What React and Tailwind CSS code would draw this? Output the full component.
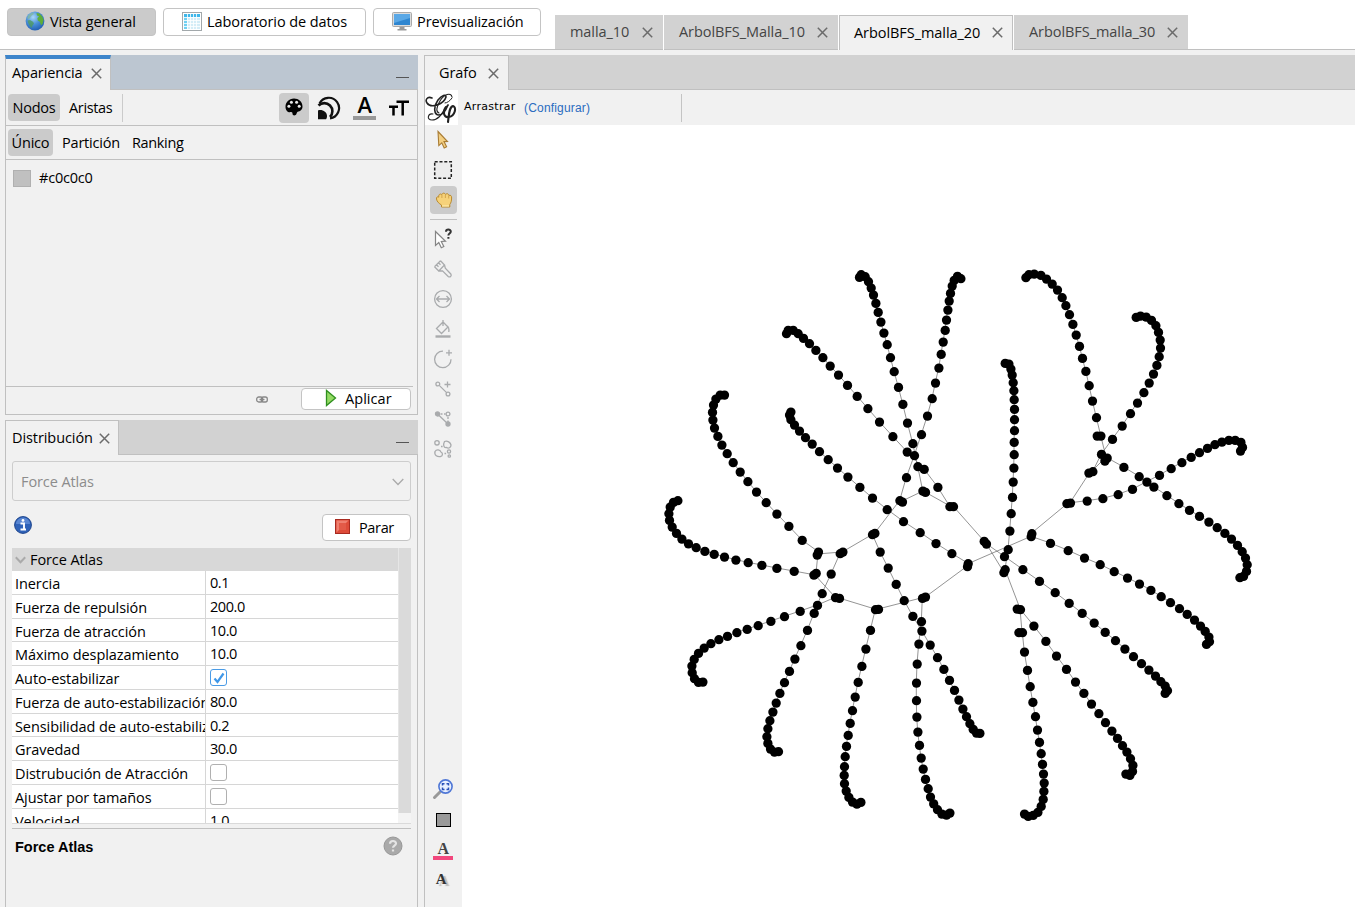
import React from "react";

const CHAINS = [
  "859.3,277 861,274.3 865,276.3 868.3,281.3 871,287.7 873.3,294.7 875.7,303 878,312 880.7,321.7 883.7,332.7 887,344.3 890.3,357.3 894,371.3 898.3,387 902.7,404 907.3,422.7 912.7,443.3 917.7,466.3 922.7,490.7 925.3,492",
  "960.7,278.3 957.3,276 954,280 952,285.7 950.3,293 949,300.7 947.7,309.7 946.3,319.7 945,330 943,341.7 941,354 938.7,367.7 935.3,382.7 932,398.3 927.3,415.7 921.3,434.3 914.3,455.3 906.3,477.3 899.7,500.3 902.3,501.7",
  "786.3,333.3 788,330 793,330 798,333.3 803.3,338 809.3,343.3 815.7,350 822.7,357.3 830,365.7 838.3,374.7 847.3,385 857,396 867.7,408.3 879.3,421.7 892.7,436.3 907,451.7 924,469 937.7,487 949.7,506.3 953.3,506.3",
  "724.3,394.7 720,394.7 715.7,398.7 713.3,404.7 712.3,412 712.7,419.7 714.3,427.7 717.7,436 721.7,444.7 727,453.3 733,462.3 740,471.7 747.7,481.3 756.3,491.7 766,502.3 776.7,513.7 788.7,526 802,540 818.3,551.7 817,554.7",
  "790.7,411.7 789.3,414.7 790.7,419.3 794.3,424.7 799.3,430.7 805.3,437.3 812,443.7 819.3,451.3 828,459.3 837.3,467.7 847.7,476.7 859.7,487 872.3,497.7 887,509.3 903.3,521.3 920,532.3 935.8,543.2 951.7,553.3 968,563.3 967.3,566.3",
  "677.7,500.3 673.3,502 670,506.7 668.7,513.3 669.3,520 672,526.7 676.3,533 681.7,538.7 688.3,543.5 696,547.3 704.7,551 714,554 724.3,556.7 735.7,559.7 748,562.3 761.7,565 776.7,568 794,571 813.7,574.7 816,573",
  "702.7,681.7 698.3,682 694.3,678.3 692,672.3 691.7,665.7 694,659 698.3,653 704,647.7 710.7,643.3 718.7,639.3 727.3,636 736.7,632.3 747,629 758,625.3 770.7,621 784.3,616.3 800,611 817.3,605 835.3,597.3 839.3,598",
  "778.3,751.3 774.3,751.7 770.3,748.7 767.7,743 766.7,736.3 767.7,728.3 769.7,720.3 772.7,711.7 776,702.7 779.7,693 784.3,682.3 789.3,671 794.7,658.7 800.7,645.3 807.3,630 814,613 822,593.3 831,573.7 840,553.3 842.7,551.7",
  "860.7,802 856.7,803.7 852.3,801.7 848.7,797 846,790.7 844.3,783.3 844,775 844.3,766.3 845,756.3 846.3,746 848,735 850,723 852.3,710.3 855,696.7 858,682 861.7,666 865.7,648.7 870.3,630 875.3,609.3 878.3,609",
  "949.7,812.7 946.3,814.7 941.7,813.7 937.3,809.3 933.5,803.5 930.3,796.7 928,788.3 925.3,779 923,768.7 921,757.7 919.3,745 917.7,731.7 916.7,716.7 916.3,700.3 916.3,682.7 917,663.7 918.7,643.7 921.3,621.3 922.3,598 925.3,596.7",
  "979.7,733 976.3,732.7 973,729 969.7,723.3 966.3,716.3 962.7,708.7 958.7,699.7 954.3,690 949.3,680 943.7,669 937.3,657.3 930,644.7 921.7,630.7 912.7,616 904,600.3 896,584 888,567.7 880,551.7 872.3,534.3 874.7,533",
  "1024.3,813.7 1028,816 1033,815 1037.7,812 1041,806 1043,799 1043.7,791 1044,782.7 1043.3,773.7 1042.3,764 1041,753.3 1039.3,742 1037.3,729.7 1035.3,716.3 1032.7,702 1030,686.3 1027.3,670 1024.3,651.7 1022.3,632.3 1018.7,632.3",
  "1125.7,773.7 1129.7,775 1132.3,771 1132.7,765 1130.3,758.3 1126.7,751.7 1122.3,745.3 1117.3,738 1111.7,730.7 1105.3,722.3 1098.7,713.3 1091.3,703.7 1083.7,693 1075.3,681.7 1066.3,669 1056.3,655.7 1045.7,641 1033.7,625.7 1020.3,609.3 1017,608.7",
  "1165,693 1167.3,690.3 1165,685.7 1160.7,681.3 1155.3,675.7 1148.7,669.7 1141.3,663.3 1133.3,656.3 1124.7,648.7 1115.3,640.3 1105,632 1094,622.7 1082,613 1069,603 1055,592.3 1039.3,581 1022.7,569.3 1004.3,556.3 986.3,543.7 984,541",
  "1206.3,644 1209.3,641.3 1208.7,636.7 1205,631 1200.3,625.7 1194.3,619.7 1187,614 1179.3,608.3 1170.3,602.3 1161,596.3 1150.7,590 1139.3,583.7 1127.3,577.7 1114,571.3 1100,564.3 1084.3,557.7 1068,550.3 1050.3,543 1031,536.3 1031.7,533.3",
  "1239.7,577.3 1243.3,576 1246.3,571 1247,564.3 1245.3,557.7 1242,551.3 1237.3,545 1231.3,538.7 1224.7,533 1217,527.3 1208.7,521.7 1199.3,516 1189.3,510 1178.7,503.3 1166.7,495.3 1153.7,486.7 1139,476.3 1123.7,467 1107,457.7 1104.7,460.7",
  "1240.3,450.7 1242.3,447 1240.7,442 1235,440 1228.7,440 1221.7,441.7 1214.7,444.3 1207.3,448 1199.3,452.3 1191,457 1181.7,462.3 1171,468.3 1159.3,475 1146.7,481.7 1132.3,489 1118,494.3 1102.7,498.3 1087,500.7 1070.3,502.7 1066.7,503.3",
  "1136,317 1140.3,315.7 1146,316.7 1151.3,320 1155.7,325.3 1158.3,332 1160,339.7 1160.3,347.7 1159,356.3 1156.7,365 1153.3,373.7 1149,382.7 1143.7,392.3 1137.3,402.7 1130.3,413.3 1122,425.7 1112.3,439 1101.3,454 1092.7,471.3 1088.7,472.7",
  "1025.7,277.3 1028.7,274.3 1034,273.7 1040.7,275 1046.3,278.7 1052,283.7 1057.3,289.7 1062,297.3 1065.7,305.3 1069.3,314.3 1072.7,324 1076,334.7 1079.3,346 1082.3,358 1085.7,371 1089,385.3 1092.3,400.7 1096.3,417.3 1100.7,435.7 1097,435.7",
  "1005,363 1008.7,363.7 1010.7,368.7 1012,374.7 1013,382.3 1013.7,390.3 1014,399.3 1014.3,409 1014.3,419.3 1014.3,430.3 1014,442 1014,454.3 1013.7,467.7 1013,481.7 1012.3,497 1011,513.3 1009.7,530.7 1008,549.3 1005,569.3 1003.7,572.3",
];

const LINKS =
  "M953.3 506.3L984 541M986.3 543.7L1003.7 572M1005 569.3L1020.3 609.3M1031 536.3L967.3 564M967.3 566L925.3 597M925 597L878 609M875 609L839 598M835 597L814 574M816 573L818 553M817 554L842 552M842.7 551.7L873 534M874.7 533L900 500M902 501L923 491M925 492L950 506M1020 609L1022 632M1031.7 533L1068 503M1070 502.7L1090 472M1092 471L1104 459M1100.7 435.7L1106 457";

function Graph() {
  return (
    <svg className="block shrink-0" width="893" height="782" viewBox="462 125 893 782">
      <g fill="none" stroke="#666" strokeWidth="0.7" shapeRendering="auto">
        {CHAINS.map((c, i) => (
          <polyline key={i} points={c} />
        ))}
        <path d={LINKS} />
      </g>
      <g transform="translate(.2 .4)">
        {CHAINS.map((c, i) =>
          c.split(" ").map((p, j) => {
            const [x, y] = p.split(",");
            return <circle key={i + "-" + j} cx={x} cy={y} r="4.65" />;
          })
        )}
      </g>
    </svg>
  );
}

function Close({ className = "" }) {
  return (
    <svg className={"shrink-0 " + className} width="11" height="11" viewBox="0 0 11 11">
      <path d="M.8 .8L10.2 10.2M10.2 .8L.8 10.2" stroke="#6b6b6b" strokeWidth="1.5" />
    </svg>
  );
}

function Globe() {
  return (
    <svg width="20" height="20" viewBox="0 0 20 20">
      <defs>
        <radialGradient id="globe" cx=".4" cy=".3" r=".75">
          <stop offset="0" stopColor="#a9d8f8" />
          <stop offset=".5" stopColor="#4a90d8" />
          <stop offset="1" stopColor="#1f5bb0" />
        </radialGradient>
      </defs>
      <circle cx="10" cy="10" r="9.4" fill="url(#globe)" />
      <path d="M2.400 6C3.500 3.400 6 1.900 8.300 1.500l.6 1.500-2.200 1.600-2.200 2.800L3 8.200z" fill="#7fb6a0" opacity=".8" />
      <path d="M2.500 9.500l2.500-.5 3 1.800 1 1.700-1.600 2.200-.8 2.400-1.800-2L3.200 12z" fill="#4f9a58" opacity=".75" />
      <path d="M11.500 2l3 .4 2.800 3 1.300 3.400-1 4.200-1.600 1.200-1.200-3.400-2-1.200-.4-2.600 1.800-1.600-2.200-1z" fill="#5fb030" opacity=".95" />
    </svg>
  );
}

function TableIcon() {
  return (
    <svg width="20" height="19" viewBox="0 0 20 19">
      <rect x=".5" y=".5" width="19" height="18" fill="#fff" stroke="#a2a8ab" />
      <rect x="2" y="2" width="16" height="3" fill="#3fb7ea" />
      <rect x="2" y="5" width="3" height="12" fill="#6fd0f2" />
      <rect x="5" y="5" width="13" height="12" fill="#d4edf7" />
      <path d="M2 5.500h16M2 8.500h16M2 11.500h16M2 14.500h16M5.500 2v15M8.500 2v15M11.500 2v15M14.500 2v15" stroke="#fff" strokeWidth=".8" />
    </svg>
  );
}

function Monitor() {
  return (
    <svg width="20" height="19" viewBox="0 0 20 19">
      <rect x=".5" y=".5" width="19" height="14" rx="1" fill="#dcdcdc" stroke="#a9a9a9" />
      <rect x="2" y="2" width="16" height="11" fill="#2f86d0" />
      <path d="M2 2h16v4L2 11z" fill="#5aa8e6" />
      <path d="M7.500 15h5v2h2v1.500h-9V17h2z" fill="#9a9a9a" />
    </svg>
  );
}

function TopButton({ icon, label, className }) {
  return (
    <button className={"flex h-7 shrink-0 items-center rounded border border-[#c4c4c4] " + className}>
      <span className="-mt-0.5">{icon}</span>
      <span className="ml-[5px] whitespace-nowrap">{label}</span>
    </button>
  );
}

function Tool({ children, className = "h-[30px]" }) {
  return <div className={"flex w-full shrink-0 items-center justify-center " + className}>{children}</div>;
}

const gray = { fill: "none", stroke: "#a9abad", strokeWidth: 1.3 };

function ToolColumn() {
  return (
    <div className="flex w-[37px] shrink-0 flex-col pr-px">
      <Tool>
        <svg width="20" height="20" viewBox="0 0 20 20">
          <path d="M5 1.500L14.500 11.500 11 11.600l2.600 5.200-2.400 1.200-2.400-5.200-3 2.800z" fill="#f3cf82" stroke="#a97c34" strokeWidth="1.100" />
        </svg>
      </Tool>
      <Tool>
        <svg width="20" height="20" viewBox="0 0 20 20">
          <rect x="1.700" y="1.700" width="16.600" height="16.600" fill="#ececec" stroke="#222" strokeWidth="1.500" strokeDasharray="3 1.800" />
        </svg>
      </Tool>
      <Tool>
        <div className="ml-px flex h-7 w-[27px] items-center justify-center rounded bg-[#cbcbcb]">
          <svg width="18" height="18" viewBox="0 0 18 18">
            <path d="M1.500 8C1.200 5.700 3 5.300 3.800 6.200 3.200 3.300 5.500 2.300 6.800 3.600 7.500 1.700 9.800 1.700 10.500 3.400 12 2 13.600 2.800 13.800 4.400c2-.6 3 .6 2.800 2.600 0 3-.6 4.800-1.800 6.500v2.500H6.500V14C4 12.500 1.800 10.500 1.500 8z" fill="#f6d27a" stroke="#b98a30" strokeWidth="1" />
            <path d="M6.900 4v3M10.400 4v3M13.700 5v2.500" stroke="#c99a45" strokeWidth=".8" />
            <path d="M7 15h7" stroke="#fff0b8" strokeWidth="1" />
          </svg>
        </div>
      </Tool>
      <div className="flex h-[9px] shrink-0 items-center justify-center">
        <div className="ml-px h-px w-[27px] bg-[#c0c0c0]" />
      </div>
      <Tool>
        <svg width="20" height="22" viewBox="0 0 20 22">
          <path d="M2.500 3.500v14l3.300-3 2.500 5.200 2.500-1.200-2.500-5 4.200-.3z" fill="#fff" stroke="#858585" strokeWidth="1.200" />
          <path d="M13 3.800C13 .9 17.800.9 17.800 3.600 17.800 5.600 15.400 5.500 15.400 7.500M15.400 9v1.800" fill="none" stroke="#333" strokeWidth="2" />
        </svg>
      </Tool>
      <Tool>
        <svg width="20" height="20" viewBox="0 0 20 20" {...gray}>
          <path d="M1.500 7.800L7.500 1.800M7.500 1.800L11.500 6 5.800 12 1.500 7.800M3.500 5.800l2 2M5.500 3.800l2 2M11.500 6l.8 3.200 5.500 5.800c1.300 1.800-.9 3.800-2.600 2.400L9.500 11.800 5.800 12" />
        </svg>
      </Tool>
      <Tool>
        <svg width="20" height="20" viewBox="0 0 20 20" {...gray}>
          <circle cx="10" cy="10" r="8.400" />
          <path d="M3.500 10h13M6.500 7L3.500 10l3 3M13.500 7l3 3-3 3" />
        </svg>
      </Tool>
      <Tool>
        <svg width="20" height="20" viewBox="0 0 20 20" {...gray}>
          <path d="M10 3L3.500 9.500l5 5L15 8zM10 1v6M13.500 6.500c2.300 1 2.700 3.500 2.300 6.500" />
          <path d="M2.500 17.500h15" strokeWidth="2.400" />
        </svg>
      </Tool>
      <Tool>
        <svg width="20" height="20" viewBox="0 0 20 20" {...gray}>
          <path d="M10 2.200a8.200 8.200 0 1 0 8 8M16 .8v6M13 3.800h6" />
        </svg>
      </Tool>
      <Tool>
        <svg width="20" height="20" viewBox="0 0 20 20" {...gray}>
          <circle cx="4.800" cy="5" r="1.900" />
          <circle cx="15" cy="15" r="1.900" />
          <path d="M6.200 6.400l7.400 7.200M14.500 2.500v6M11.500 5.500h6" />
        </svg>
      </Tool>
      <Tool>
        <svg width="20" height="20" viewBox="0 0 20 20" {...gray}>
          <circle cx="4.500" cy="5" r="2" fill="#a9abad" />
          <circle cx="15" cy="15" r="2" fill="#a9abad" />
          <circle cx="15" cy="5" r="1.900" />
          <path d="M5 5.500l9.500 9" />
          <path d="M7.500 5h5M15 8v5" strokeDasharray="2 1.500" />
        </svg>
      </Tool>
      <Tool>
        <svg width="20" height="20" viewBox="0 0 20 20" {...gray}>
          <circle cx="4" cy="3.800" r="2.200" />
          <path d="M11.500 2.500c3-1 6 1 6.500 3.500 0 2.500-2.500 4-4.500 2.500-3 .5-3.500-3-2-6zM2 12.500c1.500-2.500 5-2 6 .5 2 1 2 4-.5 4.500-3 .5-6.500-1-5.500-5z" />
          <circle cx="16" cy="12.500" r="1.600" />
          <circle cx="16.300" cy="17" r="1.200" />
          <path d="M8 7.500h1.600M11.500 14.500h1.600" strokeWidth="1.700" />
        </svg>
      </Tool>
      <Tool className="mt-[310px] h-[30px]">
        <svg width="22" height="22" viewBox="0 0 22 22">
          <path d="M2.500 19.500l6-6" stroke="#999" strokeWidth="3" strokeLinecap="round" />
          <circle cx="13.500" cy="8.500" r="6.600" fill="#e8f0ff" stroke="#4f77d6" strokeWidth="1.600" />
          <path d="M10.500 7.500V5.700h2M14.500 5.700h2v1.800M16.500 9.600v1.800h-2M12.500 11.400h-2V9.600" fill="none" stroke="#2850b8" strokeWidth="1.500" />
        </svg>
      </Tool>
      <Tool className="h-8">
        <div className="ml-px h-3.5 w-[15px] border border-black bg-[#999]" />
      </Tool>
      <Tool className="h-[30px]">
        <div className="flex flex-col items-center">
          <span className="font-['Liberation_Serif',serif] text-[16px] leading-[14px] font-bold text-[#444]">A</span>
          <div className="h-1 w-5 bg-[#f2477d]" />
        </div>
      </Tool>
      <Tool className="h-[26px]">
        <span className="mr-1 font-['Liberation_Serif',serif] text-[15px] font-bold text-[#333] [text-shadow:3px_2px_1px_#bbb]">A</span>
      </Tool>
    </div>
  );
}

function PanelTabs({ label, width, active, mini }) {
  return (
    <div className={"flex h-[35px] shrink-0 tracking-[-0.08px] " + (active ? "bg-[#bcc6d1]" : "bg-[#d2d2d2]")}>
      <div
        className={
          "flex shrink-0 items-center justify-between border-x border-[#c0c0c0] bg-[#f1f1f1] " +
          width +
          (active ? " border-t-4 border-t-[#3d85cb] pb-[3px]" : " border-t")
        }
      >
        <span>{label}</span>
        <Close />
      </div>
      <div className="flex flex-1 items-center justify-end border-b border-[#c0c0c0]">
        {mini && <div className="mt-[10px] mr-[9px] h-px w-[13px] bg-[#555]" />}
      </div>
    </div>
  );
}

function Apariencia() {
  return (
    <section className="flex h-[360px] flex-col">
      <PanelTabs label="Apariencia" width="w-[106px] pl-1.5 pr-2" active mini />
      <div className="flex flex-1 flex-col border-x border-b border-[#c0c0c0]">
        <div className="flex h-9 items-center border-b border-[#c0c0c0] pl-0.5">
          <span className="flex h-[27px] w-[52px] items-center justify-center rounded bg-[#cbcbcb] tracking-[-0.2px]">Nodos</span>
          <span className="ml-[9px] w-[44px] whitespace-nowrap">Aristas</span>
          <div className="ml-[9px] h-7 w-px bg-[#cbcbcb]" />
          <div className="ml-auto flex h-[30px] w-[30px] items-center justify-center rounded bg-[#cbcbcb]">
            <svg className="-mt-0.5" width="18" height="18" viewBox="0 0 18 18">
              <path d="M9 .5C4 .5.500 4.300.500 8.700c0 4 2.600 6 5.300 5.400 1.300-.2 1.700.7 1.700 1.600 0 2.400 3.500 2.100 4 .1.600-2.300 1.500-2 3-2.500 1.600-.8 3-2.300 3-4.600C17.500 3.500 13.500.500 9 .5z" />
              <g fill="#e8e8e8">
                <circle cx="3.900" cy="8.200" r="1.500" />
                <circle cx="6.400" cy="4.300" r="1.500" />
                <circle cx="11.600" cy="4.300" r="1.500" />
                <circle cx="14.200" cy="8.200" r="1.500" />
              </g>
            </svg>
          </div>
          <svg className="ml-2" width="24" height="24" viewBox="0 0 24 24">
            <path d="M2.500 7.500A10.300 10.300 0 1 1 13 22.300" fill="none" stroke="#111" strokeWidth="2.200" />
            <path d="M1.500 9.500a7.800 7.800 0 1 1 11.500 11.500" fill="none" stroke="#111" strokeWidth="2.600" />
            <path d="M1 14.500c4-1.500 9 1.500 9 5.500 0 1.500-.5 2.500-1 3.300H1z" fill="#111" />
          </svg>
          <div className="ml-3 flex w-[23px] flex-col items-center">
            <span className="h-[20px] text-[22px] leading-[17px] font-semibold">A</span>
            <div className="h-1 w-full bg-[#999]" />
          </div>
          <svg className="mr-2 ml-[13px]" width="20" height="18" viewBox="0 0 20 18">
            <path d="M7.500 2.800H20M13.700 2.500v14M0 7.700h9M4.500 7.500v9" stroke="#000" strokeWidth="2.500" />
          </svg>
        </div>
        <div className="flex h-[34px] items-center border-b border-[#c0c0c0] pl-0.5">
          <span className="flex h-[27px] w-[45px] items-center justify-center rounded bg-[#cbcbcb] tracking-[-0.2px]">Único</span>
          <span className="ml-[9px] w-[70px] tracking-[-0.2px]">Partición</span>
          <span>Ranking</span>
        </div>
        <div className="flex items-center gap-2 pt-2 pl-[7px]">
          <div className="h-[17px] w-[18px] border border-[#b0b0b0] bg-[#c0c0c0]" />
          <span className="tracking-[-0.2px]">#c0c0c0</span>
        </div>
        <div className="mt-auto mr-1 h-px bg-[#c0c0c0]" />
        <div className="flex h-[27px] shrink-0 items-start pt-px">
          <svg className="mt-2 ml-[250px]" width="12" height="7" viewBox="0 0 12 7" fill="none" stroke="#888" strokeWidth="1.300">
            <rect x=".7" y="1" width="6" height="5" rx="2" />
            <rect x="5.300" y="1" width="6" height="5" rx="2" />
            <path d="M3.500 3.500h5" />
          </svg>
          <button className="ml-[33px] flex h-[22px] w-[110px] items-center rounded border border-[#c4c4c4] bg-white pl-[23px]">
            <svg className="-mt-0.5" width="12" height="18" viewBox="0 0 12 18">
              <path d="M1.500 1.500v15L10.500 9z" fill="#93da63" stroke="#2f8f1f" strokeWidth="1.300" />
            </svg>
            <span className="ml-2 tracking-[0.05px]">Aplicar</span>
          </button>
        </div>
      </div>
    </section>
  );
}

const ROWS = [
  ["Inercia", "0.1", "h-6"],
  ["Fuerza de repulsión", "200.0", "h-6"],
  ["Fuerza de atracción", "10.0", "h-[23px]"],
  ["Máximo desplazamiento", "10.0", "h-6"],
  ["Auto-estabilizar", true, "h-6"],
  ["Fuerza de auto-estabilización", "80.0", "h-6"],
  ["Sensibilidad de auto-estabilización", "0.2", "h-[23px]"],
  ["Gravedad", "30.0", "h-6"],
  ["Distrubución de Atracción", false, "h-6"],
  ["Ajustar por tamaños", false, "h-6"],
  ["Velocidad", "1.0", "h-6"],
];

function Check({ on }) {
  return (
    <span className={"flex h-[17px] w-[17px] items-center justify-center rounded-[3px] border bg-white " + (on ? "border-[#4a9be6]" : "border-[#b0b0b0]")}>
      {on && (
        <svg width="12" height="12" viewBox="0 0 12 12">
          <path d="M1.500 6.500l3 3.500L10.500 1.500" fill="none" stroke="#3f97e8" strokeWidth="2.200" />
        </svg>
      )}
    </span>
  );
}

function Distribucion() {
  return (
    <section className="mt-[5px] flex min-h-0 flex-1 flex-col">
      <PanelTabs label="Distribución" width="w-[114px] pl-1.5 pr-2" mini />
      <div className="flex min-h-0 flex-1 flex-col border-x border-[#c0c0c0] px-1.5">
        <div className="mt-1.5 flex h-10 shrink-0 items-center justify-between rounded-[3px] border border-[#cdcdcd] pt-px pr-1.5 pl-2 text-[#8c8c8c]">
          <span className="tracking-[-0.1px]">Force Atlas</span>
          <svg width="12" height="8" viewBox="0 0 12 8">
            <path d="M.7 1L6 6.500 11.300 1" fill="none" stroke="#aaa" strokeWidth="1.300" />
          </svg>
        </div>
        <div className="mt-[13px] flex h-[27px] shrink-0 items-start justify-between pl-0.5">
          <svg className="mt-[2px]" width="18" height="18" viewBox="0 0 18 18">
            <circle cx="9" cy="9" r="8.400" fill="#2f62b8" stroke="#1d448c" />
            <path d="M2 8a7 6.500 0 0 1 14 0z" fill="#6a94dc" opacity=".7" />
            <path d="M6.500 7.500H10V13M6.500 13.500h5.500" fill="none" stroke="#fff" strokeWidth="1.900" />
            <circle cx="9" cy="4.400" r="1.400" fill="#fff" />
          </svg>
          <button className="flex h-[27px] w-[89px] items-center rounded border border-[#c4c4c4] bg-white pl-3">
            <svg className="-mt-0.5" width="15" height="15" viewBox="0 0 15 15">
              <rect x=".5" y=".5" width="14" height="14" fill="#dd4b39" stroke="#a82a20" />
              <path d="M1.500 1.500h12L1.500 13.500z" fill="#ef8070" />
              <rect x="4" y="4" width="7" height="7" fill="#e35a48" />
            </svg>
            <span className="ml-[9px]">Parar</span>
          </button>
        </div>
        <div className="mt-[7px] flex h-[276px] shrink-0 overflow-hidden border-b border-[#dadada]">
          <div className="w-[386px] shrink-0">
            <div className="flex h-[23px] items-center bg-[#d8d8d8] pl-[3px]">
              <svg width="11" height="8" viewBox="0 0 11 8">
                <path d="M.8 1.200L5.500 6.200 10.200 1.200" fill="none" stroke="#aaa" strokeWidth="2" />
              </svg>
              <span className="ml-1 tracking-[-0.1px]">Force Atlas</span>
            </div>
            {ROWS.map(([name, value, h]) => (
              <div key={name} className={"flex border-b border-[#d6d6d6] bg-white " + h}>
                <div className="w-[194px] shrink-0 overflow-hidden border-r border-[#d6d6d6] pt-px pl-[3px] leading-[23px] tracking-[-0.08px] whitespace-nowrap">{name}</div>
                <div className="flex items-start pl-1 leading-[23px] tracking-[-0.45px]">
                  {typeof value === "string" ? value : <span className="pt-[3px]"><Check on={value} /></span>}
                </div>
              </div>
            ))}
          </div>
          <div className="flex-1 bg-[#f4f4f4]">
            <div className="h-[265px] border-l border-[#e6e6e6] bg-[#dadada]" />
          </div>
        </div>
        <div className="mt-1 h-px shrink-0 bg-[#c0c0c0]" />
        <div className="flex items-start justify-between pr-2 pl-[3px]">
          <span className="mt-2 font-['Liberation_Sans',sans-serif] text-[14.5px] leading-5 font-bold tracking-normal">Force Atlas</span>
          <svg className="mt-[7px]" width="20" height="20" viewBox="0 0 20 20">
            <circle cx="10" cy="10" r="9" fill="#a9a9a9" stroke="#989898" />
            <path d="M7 7.800C7 4 13 4.200 13 7.500 13 9.700 10 9.600 10 11.800M10 13.500v2" fill="none" stroke="#e4e4e4" strokeWidth="2.200" />
          </svg>
        </div>
      </div>
    </section>
  );
}

function WorkTab({ label, className, active }) {
  return (
    <div
      className={
        "flex h-[35px] shrink-0 items-center justify-between tracking-[-0.06px] " +
        className +
        (active
          ? " border-x border-t border-[#c0c0c0] bg-[#f1f1f1] pr-[9px] pb-px pl-[14px] text-black"
          : " border-b border-[#c0c0c0] bg-[#d2d2d2] pr-2.5 pl-[15px] text-[#444]")
      }
    >
      <span>{label}</span>
      <Close />
    </div>
  );
}

export default function App() {
  return (
    <div className="flex h-[907px] w-[1355px] flex-col overflow-hidden bg-[#f1f1f1] font-['Open_Sans','Noto_Sans',sans-serif] text-[14.5px] leading-5 tracking-[-0.35px] text-black">
      <header className="flex h-[50px] shrink-0 bg-white">
        <div className="flex w-[555px] shrink-0 gap-[7px] border-b border-[#c0c0c0] pt-2 pl-[7px] tracking-[-0.08px]">
          <TopButton icon={<Globe />} label="Vista general" className="w-[149px] bg-[#cbcbcb] pl-[17px]" />
          <TopButton icon={<TableIcon />} label="Laboratorio de datos" className="w-[203px] bg-white pl-[18px]" />
          <TopButton icon={<Monitor />} label="Previsualización" className="w-[168px] bg-white pl-[18px]" />
        </div>
        <div className="flex flex-1 items-end gap-px">
          <WorkTab label="malla_10" className="w-[108px]" />
          <WorkTab label="ArbolBFS_Malla_10" className="w-[174px]" />
          <WorkTab label="ArbolBFS_malla_20" className="w-[174px]" active />
          <WorkTab label="ArbolBFS_malla_30" className="w-[174px]" />
          <div className="-ml-px h-px flex-1 bg-[#c0c0c0]" />
        </div>
      </header>
      <div className="flex min-h-0 flex-1 pt-[5px]">
        <div className="ml-[5px] flex w-[413px] shrink-0 flex-col">
          <Apariencia />
          <Distribucion />
        </div>
        <main className="ml-1.5 flex min-w-0 flex-1 flex-col">
          <PanelTabs label="Grafo" width="w-[85px] pl-[14px] pr-[9px]" />
          <div className="flex h-[35px] shrink-0 items-center border-l border-[#c0c0c0]">
            <div className="flex h-full w-[33px] items-center justify-center bg-white">
              <svg width="33" height="35" viewBox="0 0 33 35" fill="none" stroke="#222" strokeLinecap="round">
                <path d="M7 8C2 6 0 10 2 13 6 19 19 14 21 7 21 4 17 5 13 10 8 17 9 25 14 25 18 25 21 20 23 15" strokeWidth="1.600" />
                <path d="M27 7C26 2 19 4 15 11 11 18 11 22 14 23M23 15C19 18 16 30 7 30 1 30 3 23 8 24" strokeWidth="1.100" />
                <path d="M27 8C25 11 22 13 20 13" strokeWidth="1" />
                <path d="M21 17C17 22 19 28 24 27 30 26 32 17 28 16 24 17 24 25 23 32" strokeWidth="2.100" />
              </svg>
            </div>
            <span className="-mt-0.5 ml-[6px] w-[60px] font-['DejaVu_Sans',sans-serif] text-[11px] tracking-[0.3px]">Arrastrar</span>
            <span className="font-['Liberation_Sans',sans-serif] text-[12px] tracking-[0.18px] text-[#2a6cc0]">(Configurar)</span>
            <div className="ml-[91px] h-7 w-px bg-[#c4c4c4]" />
          </div>
          <div className="flex min-h-0 flex-1 border-l border-[#c0c0c0]">
            <ToolColumn />
            <div className="flex-1 bg-white">
              <Graph />
            </div>
          </div>
        </main>
      </div>
    </div>
  );
}
